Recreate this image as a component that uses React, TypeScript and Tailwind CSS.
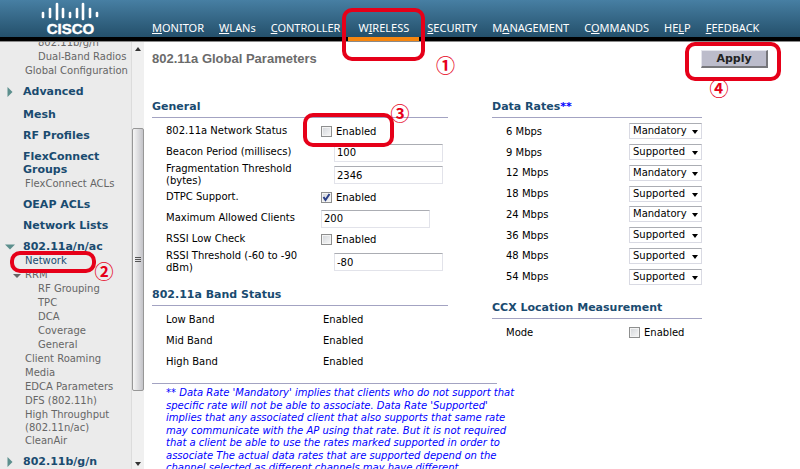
import { useState, type ReactNode } from "react";

function Frame({ className }: { className: string }) {
  return (
    <span
      aria-hidden="true"
      className={`pointer-events-none absolute z-20 rounded-[10px] border-4 border-[#e60019] ${className}`}
    />
  );
}

function Marker({ children, className }: { children: ReactNode; className: string }) {
  return (
    <span
      className={`pointer-events-none absolute z-20 w-5 text-center font-['Noto_Sans_CJK_JP',sans-serif] text-[19px] leading-5 font-bold text-[#e60019] ${className}`}
    >
      {children}
    </span>
  );
}

const menu = [
  ["", "M", "ONITOR"],
  ["", "W", "LANs"],
  ["", "C", "ONTROLLER"],
  ["W", "I", "RELESS"],
  ["", "S", "ECURITY"],
  ["M", "A", "NAGEMENT"],
  ["C", "O", "MMANDS"],
  ["HE", "L", "P"],
  ["", "F", "EEDBACK"],
];

const bars = [
  [43, 13, 17],
  [50, 9, 17],
  [57, 4, 19],
  [63, 9, 17],
  [70, 13, 17],
  [77, 9, 17],
  [83, 4, 19],
  [90, 9, 17],
  [97, 13, 16],
];

function Logo() {
  return (
    <svg className="h-[37px] w-36 shrink-0" viewBox="0 0 144 37" role="img" aria-label="Cisco">
      <g stroke="#fff" strokeWidth="2.6" strokeLinecap="round">
        {bars.map(([x, a, b]) => (
          <line key={x} x1={x} x2={x} y1={a} y2={b} />
        ))}
      </g>
      <text
        x="70.5"
        y="34"
        textAnchor="middle"
        fill="#fff"
        stroke="#fff"
        strokeWidth="0.4"
        className="font-['Liberation_Sans',Arial,sans-serif] text-[15px] font-bold"
      >
        CISCO
      </text>
    </svg>
  );
}

function Header() {
  return (
    <header className="relative z-10 flex h-[41px] shrink-0 border-b-4 border-black bg-linear-to-b from-[#477fa3] to-[#24506b]">
      <Logo />
      <nav className="pl-2 font-['Noto_Sans',Tahoma,sans-serif] text-[11px] leading-4 text-white">
        <ul className="flex h-full gap-[15px]">
          {menu.map(([before, key, after]) => {
            const active = after === "RELESS";
            return (
              <li key={after} className={`relative flex items-end pb-px ${active ? "px-[3px]" : ""}`}>
                <a href="#">
                  {before}
                  <u>{key}</u>
                  {after}
                </a>
                {active && (
                  <>
                    <span className="absolute -inset-x-[7px] -bottom-1 h-1 bg-[#f6860f]" />
                    <Frame className="-inset-x-[13px] top-2 h-[53px]" />
                    <Marker className="top-[55px] left-20">①</Marker>
                  </>
                )}
              </li>
            );
          })}
        </ul>
      </nav>
    </header>
  );
}

function Caret({ open, className }: { open?: boolean; className: string }) {
  return (
    <svg viewBox="0 0 8 8" className={`absolute ${className}`} fill="currentColor" aria-hidden="true">
      <path d={open ? "M0 2H8L4 6Z" : "M2 0V8L6 4Z"} />
    </svg>
  );
}

function Group({ children, caret, className = "" }: { children: ReactNode; caret?: "open" | "closed"; className?: string }) {
  return (
    <li className={`relative pt-[7px] pr-8 pb-px pl-[23px] text-[11px] leading-[13px] font-bold text-[#1a4b70] ${className}`}>
      {caret && <Caret open={caret === "open"} className="top-[9px] left-[5px] size-[10px] text-[#5c8f8d]" />}
      <a href="#">{children}</a>
    </li>
  );
}

function Item({ children }: { children: ReactNode }) {
  return (
    <li className="relative pl-[25px]">
      <a href="#">{children}</a>
    </li>
  );
}

function SubItem({ children }: { children: ReactNode }) {
  return (
    <li className="pl-[38px]">
      <a href="#">{children}</a>
    </li>
  );
}

function Sidebar() {
  return (
    <aside className="flex w-36 shrink-0 bg-[#ebebeb]">
      <div className="min-w-0 flex-1 overflow-hidden">
        <ul className="-mt-[6px] text-[10px] leading-[14px] whitespace-nowrap text-[#666]">
          <SubItem>802.11b/g/n</SubItem>
          <SubItem>Dual-Band Radios</SubItem>
          <Item>Global Configuration</Item>
          <Group caret="closed">Advanced</Group>
          <Group className="mt-[2px]">Mesh</Group>
          <Group>RF Profiles</Group>
          <Group className="whitespace-normal">FlexConnect Groups</Group>
          <Item>FlexConnect ACLs</Item>
          <Group>OEAP ACLs</Group>
          <Group>Network Lists</Group>
          <Group caret="open">802.11a/n/ac</Group>
          <li className="relative pl-[25px] text-[#1a4b70]">
            <a href="#" aria-current="page">
              Network
            </a>
            <Frame className="-top-[3px] left-[10px] h-[22px] w-[86px]" />
            <Marker className="top-[7px] left-[94px]">②</Marker>
          </li>
          <li className="relative pl-[25px]">
            <Caret open className="top-1 left-[13px] size-2" />
            <a href="#">RRM</a>
          </li>
          <SubItem>RF Grouping</SubItem>
          <SubItem>TPC</SubItem>
          <SubItem>DCA</SubItem>
          <SubItem>Coverage</SubItem>
          <SubItem>General</SubItem>
          <Item>Client Roaming</Item>
          <Item>Media</Item>
          <Item>EDCA Parameters</Item>
          <Item>DFS (802.11h)</Item>
          <li className="pl-[25px] leading-[13px]">
            <a href="#">
              High Throughput
              <br />
              (802.11n/ac)
            </a>
          </li>
          <Item>CleanAir</Item>
          <Group caret="closed">802.11b/g/n</Group>
        </ul>
      </div>
      <div className="flex w-[13px] flex-col border-l border-[#dcdcdc] bg-[#f0f0f0]" aria-hidden="true">
        <svg viewBox="0 0 12 14" className="h-[14px] w-3" fill="#333">
          <path d="M3 9H9L6 5Z" />
        </svg>
        <div className="flex flex-1 flex-col">
          <div className="flex-72" />
          <div className="flex flex-263 flex-col items-center justify-center gap-px rounded-[2px] border border-[#979797] bg-linear-to-r from-[#f6f6f6] to-[#c4c4c9]">
            <i className="h-px w-[6px] bg-[#555]" />
            <i className="h-px w-[6px] bg-[#555]" />
            <i className="h-px w-[6px] bg-[#555]" />
          </div>
          <div className="flex-66" />
        </div>
        <svg viewBox="0 0 12 12" className="h-3 w-3" fill="#333">
          <path d="M3 5H9L6 9Z" />
        </svg>
      </div>
    </aside>
  );
}

function Heading({ children }: { children: ReactNode }) {
  return (
    <h2 className="mb-[3px] border-b border-[#a3a3c2] pb-1 text-[11px] leading-[13px] font-bold text-[#1a4b70]">
      {children}
    </h2>
  );
}

function Check({ id, label, initial = false }: { id: string; label: string; initial?: boolean }) {
  const [on, setOn] = useState(initial);
  return (
    <span className="relative flex items-center gap-1">
      <input
        id={id}
        type="checkbox"
        aria-label={label}
        checked={on}
        onChange={(e) => setOn(e.target.checked)}
        className="peer size-[11px] appearance-none border border-[#8e8f8f] bg-linear-to-br from-[#d2d5d9] to-[#f8f8f8] shadow-[inset_0_0_0_1px_#f4f4f4]"
      />
      <svg
        viewBox="0 0 11 11"
        className="pointer-events-none absolute left-0 hidden size-[11px] peer-checked:block"
        fill="none"
        stroke="#2b3f87"
        strokeWidth="2"
        aria-hidden="true"
      >
        <path d="M2.5 5L4.5 8L8.5 2" />
      </svg>
      <label htmlFor={id}>Enabled</label>
    </span>
  );
}

function Row({ label, htmlFor, tall, children }: { label: ReactNode; htmlFor?: string; tall?: boolean; children: ReactNode }) {
  return (
    <div className={`flex items-center pl-[14px] ${tall ? "h-6" : "h-[21px]"}`}>
      <label htmlFor={htmlFor} className="w-[155px] shrink-0 pr-3 leading-tight">
        {label}
      </label>
      {children}
    </div>
  );
}

function Field({ id, value, className = "" }: { id: string; value: string; className?: string }) {
  return (
    <input
      id={id}
      type="text"
      defaultValue={value}
      className={`h-[18px] w-[109px] border border-[#e2e3ea] border-t-[#abadb3] bg-white px-[2px] ${className}`}
    />
  );
}

const rates = [
  ["6 Mbps", "Mandatory"],
  ["9 Mbps", "Supported"],
  ["12 Mbps", "Mandatory"],
  ["18 Mbps", "Supported"],
  ["24 Mbps", "Mandatory"],
  ["36 Mbps", "Supported"],
  ["48 Mbps", "Supported"],
  ["54 Mbps", "Supported"],
];

export default function App() {
  return (
    <div className="flex h-screen flex-col overflow-hidden bg-white font-['DejaVu_Sans',Verdana,sans-serif] text-[10px] text-black">
      <Header />
      <div className="flex min-h-0 flex-1 border-t border-[#8a8a8a]">
        <Sidebar />
        <main className="min-w-0 flex-1 overflow-hidden pl-2">
          <div className="flex items-center justify-between pt-2 pr-8">
            <h1 className="font-['Liberation_Sans',Arial,sans-serif] text-[13px] leading-[18px] font-bold text-[#6b6b6b]">
              802.11a Global Parameters
            </h1>
            <div className="relative">
              <button
                type="button"
                className="block h-[18px] w-[67px] border-t border-r-2 border-b-2 border-l border-t-[#e4e4ec] border-r-[#77777b] border-b-[#77777b] border-l-[#e4e4ec] bg-[#bcbccb] text-[11px] leading-[14px] font-bold text-[#222]"
              >
                Apply
              </button>
              <Frame className="-top-2 -left-4 h-[39px] w-[96px]" />
              <Marker className="top-7 left-2">④</Marker>
            </div>
          </div>

          <div className="mt-8 grid max-w-[550px] grid-cols-[296fr_210fr] gap-x-11">
            <div>
              <section>
                <Heading>General</Heading>
                <Row label="802.11a Network Status" htmlFor="status">
                  <span className="relative">
                    <Check id="status" label="802.11a Network Status" />
                    <Frame className="-top-[11px] -left-[18px] h-[34px] w-[91px]" />
                    <Marker className="-top-[21px] left-[69px]">③</Marker>
                  </span>
                </Row>
                <Row label="Beacon Period (millisecs)" htmlFor="beacon">
                  <Field id="beacon" value="100" className="ml-[13px]" />
                </Row>
                <Row label="Fragmentation Threshold (bytes)" htmlFor="fragment" tall>
                  <Field id="fragment" value="2346" className="ml-[13px]" />
                </Row>
                <Row label="DTPC Support." htmlFor="dtpc">
                  <Check id="dtpc" label="DTPC Support." initial />
                </Row>
                <Row label="Maximum Allowed Clients" htmlFor="clients">
                  <Field id="clients" value="200" />
                </Row>
                <Row label="RSSI Low Check" htmlFor="rssi">
                  <Check id="rssi" label="RSSI Low Check" />
                </Row>
                <Row label="RSSI Threshold (-60 to -90 dBm)" htmlFor="threshold" tall>
                  <Field id="threshold" value="-80" className="ml-[13px]" />
                </Row>
              </section>
              <section className="mt-[14px]">
                <Heading>802.11a Band Status</Heading>
                <dl>
                  {["Low Band", "Mid Band", "High Band"].map((band) => (
                    <div key={band} className="flex h-[21px] items-center pl-[14px]">
                      <dt className="w-[157px]">{band}</dt>
                      <dd>Enabled</dd>
                    </div>
                  ))}
                </dl>
              </section>
            </div>

            <div>
              <section>
                <Heading>
                  Data Rates<span className="text-[#0000ff]">**</span>
                </Heading>
                <div className="grid h-[166px] grid-rows-8">
                  {rates.map(([rate, mode]) => (
                    <div key={rate} className="flex items-center justify-between pl-[14px]">
                      <label htmlFor={rate}>{rate}</label>
                      <span className="relative">
                        <select
                          id={rate}
                          defaultValue={mode}
                          className="block h-4 w-[73px] appearance-none border border-[#d9dae3] border-t-[#abadb3] bg-white pl-[3px] leading-[14px]"
                        >
                          <option>Mandatory</option>
                          <option>Supported</option>
                          <option>Disabled</option>
                        </select>
                        <svg
                          viewBox="0 0 6 4"
                          className="pointer-events-none absolute top-[7px] right-1 h-1 w-[6px]"
                          aria-hidden="true"
                        >
                          <path d="M0 0H6L3 4Z" />
                        </svg>
                      </span>
                    </div>
                  ))}
                </div>
              </section>
              <section className="mt-[14px]">
                <Heading>CCX Location Measurement</Heading>
                <div className="flex h-[21px] items-center justify-between pl-[14px]">
                  <label htmlFor="ccx">Mode</label>
                  <span className="w-[73px]">
                    <Check id="ccx" label="Mode" />
                  </span>
                </div>
              </section>
            </div>
          </div>

          <p className="mt-[11px] max-w-[345px] border-t border-[#a3a3c2] pt-[3px] pl-[14px] leading-tight whitespace-nowrap text-[#0000ff] italic">
            ** Data Rate 'Mandatory' implies that clients who do not support that
            <br />
            specific rate will not be able to associate. Data Rate 'Supported'
            <br />
            implies that any associated client that also supports that same rate
            <br />
            may communicate with the AP using that rate. But it is not required
            <br />
            that a client be able to use the rates marked supported in order to
            <br />
            associate The actual data rates that are supported depend on the
            <br />
            channel selected as different channels may have different
          </p>
        </main>
      </div>
    </div>
  );
}
